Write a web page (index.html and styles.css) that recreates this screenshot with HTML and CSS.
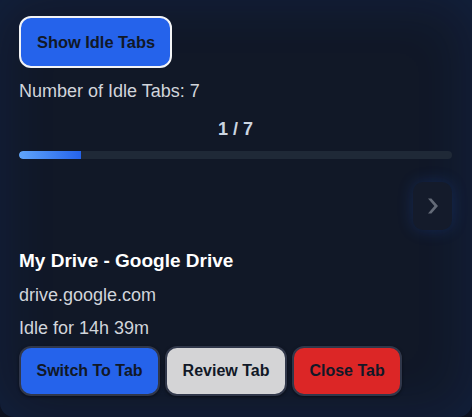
FILE: index.html
```html
<!DOCTYPE html>
<html lang="en">
<head>
  <meta charset="UTF-8">
  <meta name="viewport" content="width=device-width, initial-scale=1.0">
  <title>Idle Tabs</title>
  <link rel="stylesheet" href="styles.css">
</head>
<body>
  <div class="popup">
    <button class="btn btn-show">Show Idle Tabs</button>
    <p class="count">Number of Idle Tabs: 7</p>

    <div class="pager">1 / 7</div>
    <div class="progress">
      <div class="progress-fill" style="width: 14.29%"></div>
    </div>

    <div class="nav">
      <button class="nav-next" aria-label="Next">
        <svg width="12" height="18" viewBox="0 0 12 18">
          <path d="M1 1.5 L4.4 1.5 L11 9 L4.4 16.5 L1 16.5 L7.4 9 Z" fill="#646b78"/>
        </svg>
      </button>
    </div>

    <div class="tab-card">
      <h2 class="tab-title">My Drive - Google Drive</h2>
      <p class="tab-host">drive.google.com</p>
      <p class="tab-idle">Idle for 14h 39m</p>
      <div class="actions">
        <button class="btn btn-switch">Switch To Tab</button>
        <button class="btn btn-review">Review Tab</button>
        <button class="btn btn-close">Close Tab</button>
      </div>
    </div>
  </div>
</body>
</html>
```

FILE: styles.css
```css
html, body {
  margin: 0;
  height: 100%;
  background: #0d1220;
}
body {
  font-family: "Liberation Sans", Arial, sans-serif;
  color: #d1d5db;
}
.popup {
  box-sizing: border-box;
  height: 417px;
  padding: 16px 20px 0 19px;
  background: #111827;
  border-radius: 0 0 14px 14px;
  box-shadow: inset 0 0 60px rgba(37, 99, 235, 0.12);
}
.btn {
  font-family: inherit;
  font-size: 16.4px;
  font-weight: bold;
  color: #111827;
  border-radius: 12px;
  cursor: pointer;
  line-height: 18px;
}
.btn-show {
  padding: 15px 15px 15px 16px;
  height: 52px;
  background: #2563eb;
  border: 2px solid #f3f4f6;
}
.count {
  margin: 13px 0 0;
  font-size: 18px;
  line-height: 20px;
}
.pager {
  margin-top: 18px;
  text-align: center;
  font-size: 18px;
  font-weight: bold;
  line-height: 20px;
  color: #cbd5e1;
}
.progress {
  margin-top: 12px;
  height: 8px;
  background: #1f2937;
  border-radius: 4px;
  overflow: hidden;
}
.progress-fill {
  height: 100%;
  background: linear-gradient(to right, #60a5fa, #2563eb);
  border-radius: 4px 0 0 4px;
}
.nav {
  display: flex;
  justify-content: flex-end;
  margin-top: 23px;
}
.nav-next {
  width: 39px;
  height: 48px;
  padding: 0;
  display: flex;
  align-items: center;
  justify-content: center;
  background: #141b2b;
  border: none;
  border-radius: 10px;
  box-shadow: 0 0 16px rgba(37, 99, 235, 0.22);
  cursor: pointer;
}
.tab-title {
  margin: 20px 0 0;
  font-size: 19px;
  line-height: 22px;
  color: #ffffff;
}
.tab-host,
.tab-idle {
  margin: 13px 0 0;
  font-size: 18px;
  line-height: 20px;
}
.actions {
  display: flex;
  gap: 5px;
  margin-top: 8px;
}
.actions .btn {
  height: 50px;
  padding: 0 15.5px;
  font-size: 16px;
  border: 2px solid #30374a;
  box-shadow: 0 1px 3px rgba(0, 0, 0, 0.5);
}
.btn-switch {
  background: #2563eb;
}
.btn-review {
  background: #d4d4d6;
}
.btn-close {
  background: #dc2626;
}
```
